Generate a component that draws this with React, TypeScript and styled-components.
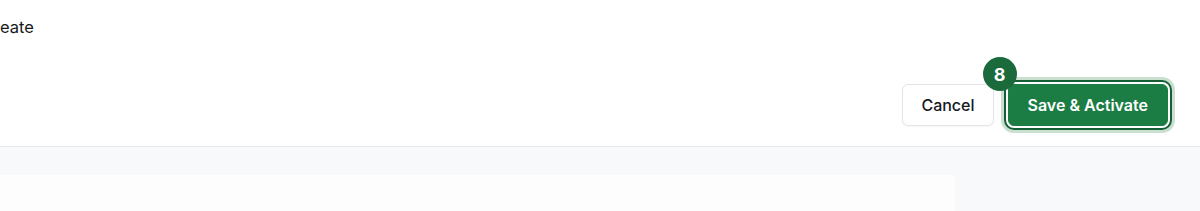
import React from "react";
import styled, { createGlobalStyle } from "styled-components";

const GlobalStyle = createGlobalStyle`
  html, body {
    margin: 0;
    padding: 0;
    background: #ffffff;
    font-family: Inter, "Liberation Sans", Arial, sans-serif;
    -webkit-font-smoothing: antialiased;
  }
`;

const Page = styled.div`
  display: flex;
  flex-direction: column;
  height: 211px;
  overflow: hidden;
`;

const Header = styled.header`
  display: flex;
  flex-direction: column;
  background: #ffffff;
  border-bottom: 1px solid #e6e8eb;
  padding: 15px 32px 20px 0;
`;

const Subtitle = styled.p`
  margin: 0;
  font-size: 16.5px;
  line-height: 24px;
  color: #16191d;
`;

const Actions = styled.div`
  display: flex;
  justify-content: flex-end;
  align-items: center;
  gap: 14px;
  margin-top: 45px;
`;

const Button = styled.button<{ $primary?: boolean }>`
  position: relative;
  height: 42px;
  padding: 0 ${(p) => (p.$primary ? "19px" : "18px")};
  border-radius: 6px;
  font-family: inherit;
  font-size: 16px;
  font-weight: ${(p) => (p.$primary ? 600 : 500)};
  cursor: pointer;
  border: 1px solid ${(p) => (p.$primary ? "#1b7d44" : "#e3e5e8")};
  background: ${(p) => (p.$primary ? "#1b7d44" : "#ffffff")};
  color: ${(p) => (p.$primary ? "#ffffff" : "#16191d")};
  box-shadow: ${(p) =>
    p.$primary
      ? "0 0 0 2px #ffffff, 0 0 0 4px #155f35, 0 0 0 7px #c9e0d0"
      : "0 1px 2px rgba(16, 24, 40, 0.04)"};
`;

const StepBadge = styled.span`
  position: absolute;
  left: -26px;
  top: -28px;
  width: 34px;
  height: 34px;
  border-radius: 50%;
  background: #1a6a3c;
  color: #ffffff;
  font-size: 18px;
  font-weight: 700;
  display: flex;
  align-items: center;
  justify-content: center;
  z-index: 2;
`;

const Body = styled.main`
  flex: 1;
  background: #f8f9fb;
  padding-top: 28px;
`;

const Card = styled.section`
  width: 955px;
  height: 100%;
  background: #fdfdfe;
`;

export default function App() {
  return (
    <>
      <GlobalStyle />
      <Page>
        <Header>
          <Subtitle>eate</Subtitle>
          <Actions>
            <Button>Cancel</Button>
            <Button $primary>
              <StepBadge>8</StepBadge>
              Save &amp; Activate
            </Button>
          </Actions>
        </Header>
        <Body>
          <Card />
        </Body>
      </Page>
    </>
  );
}
